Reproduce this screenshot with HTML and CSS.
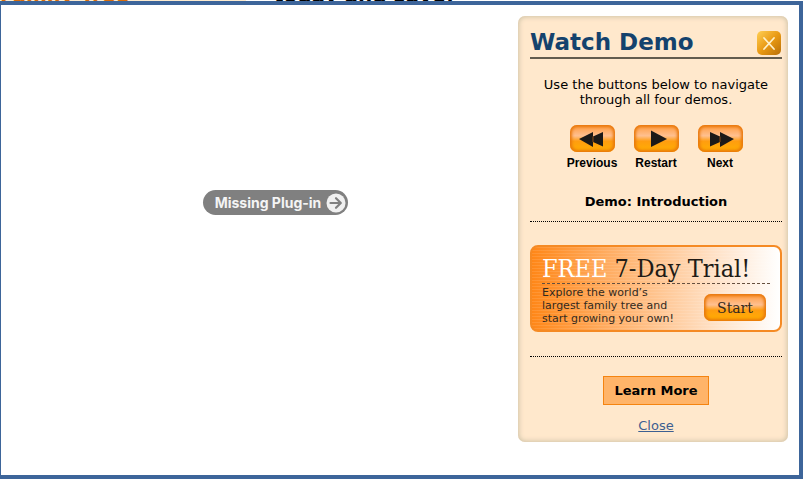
FILE: index.html
```html
<!DOCTYPE html>
<html lang="en">
<head>
	<meta charset="UTF-8">
	<title>Watch Demo</title>
	<link rel="stylesheet" href="styles.css">
</head>
<body>
	<div class="page_top">
		<div class="tree_title">Family Tree</div>
		<div class="save_title">today and save!</div>
	</div>
	<div class="demo_box">
		<div class="movie">
			<button type="button" class="plugin">Missing Plug-in
				<svg width="20" height="20" viewBox="0 0 20 20"><circle cx="10" cy="10" r="9.5" fill="#f0f0f0"/><path d="M4.5 10h10M10 5.2l4.8 4.8-4.8 4.8" fill="none" stroke="#808080" stroke-width="2.2" stroke-linecap="round" stroke-linejoin="round"/></svg>
			</button>
		</div>
		<div class="panel">
			<div class="panel_head">
				<h1>Watch Demo</h1>
				<button type="button" class="close_btn" aria-label="Close">
					<svg width="24" height="24" viewBox="0 0 24 24"><path d="M7 7l10 11M17 7L7 18" stroke="#fff0c8" stroke-width="1.8" stroke-linecap="round"/></svg>
				</button>
			</div>
			<p class="intro">Use the buttons below to navigate through all four demos.</p>
			<ul class="controls">
				<li>
					<button type="button" id="prev" aria-labelledby="prev_text"><svg width="45" height="27" viewBox="0 0 45 27"><path d="M9 14L23 7v4.500L33 7v14.500L23 17v5z" fill="#1c1a18"/><path d="M23 11.500V17" stroke="#8a4a14"/></svg></button>
					<span id="prev_text">Previous</span>
				</li>
				<li>
					<button type="button" id="restart" aria-labelledby="restart_text"><svg width="45" height="27" viewBox="0 0 45 27"><path d="M17 5.500l16 8.500-16 8z" fill="#1c1a18"/></svg></button>
					<span id="restart_text">Restart</span>
				</li>
				<li>
					<button type="button" id="next" aria-labelledby="next_text"><svg width="45" height="27" viewBox="0 0 45 27"><path d="M12 7l10 4.500V7l14 7-14 8v-5l-10 4.500z" fill="#1c1a18"/><path d="M22 11.500V17" stroke="#8a4a14"/></svg></button>
					<span id="next_text">Next</span>
				</li>
			</ul>
			<h2>Demo: Introduction</h2>
			<div class="trial">
				<div class="trial_title"><span>FREE</span> 7-Day Trial!</div>
				<div class="trial_body">
					<p>Explore the world’s<br>largest family tree and<br>start growing your own!</p>
					<button type="button" class="start">Start</button>
				</div>
			</div>
			<div class="links">
				<button type="button" class="learn">Learn More</button>
				<a href="#">Close</a>
			</div>
		</div>
	</div>
</body>
</html>
```
FILE: styles.css
```css
* {
	box-sizing: border-box;
}
body,h1,h2,p,ul {
	margin: 0;
	padding: 0;
}
body {
	min-height: 100vh;
	display: flex;
	flex-direction: column;
	font-family: Verdana, "DejaVu Sans", sans-serif;
	font-size: 13px;
	color: #000;
	background: #fff;
}
ul {
	list-style: none;
}
button {
	padding: 0;
	border: none;
	font-family: inherit;
	color: inherit;
	cursor: pointer;
}
svg {
	display: block;
}
/* page behind the demo window */
.page_top {
	height: 1px;
	overflow: hidden;
	display: flex;
	align-items: flex-end;
	font-size: 20px;
	line-height: 12px;
	font-weight: bold;
	white-space: nowrap;
}
.tree_title {
	width: 246px;
	color: #d96c0a;
	background: #fdebcf;
}
.save_title {
	padding-left: 28px;
}
.demo_box {
	flex: 1;
	display: flex;
	align-items: flex-start;
	padding: 11px 11px 33px 0;
	border: 4px solid #3d659a;
	border-left-width: 1px;
	background: #fff;
}
.movie {
	flex: 1;
	align-self: stretch;
	display: flex;
	justify-content: center;
	padding: 174px 0 0 32px;
}
.plugin {
	display: flex;
	align-items: center;
	gap: 5px;
	height: 25px;
	padding: 0 2px 0 12px;
	border-radius: 13px;
	background: #808080;
	color: #f4f4f4;
	font: bold 14px Inter, sans-serif;
}
.panel {
	width: 270px;
	padding: 12px 6px 9px 12px;
	border-radius: 7px;
	background: #ffe8cc;
	box-shadow: inset 0 0 5px 1px #cfc3a8;
	text-align: center;
}
.panel_head {
	display: flex;
	justify-content: space-between;
	align-items: center;
	height: 31px;
	border-bottom: 2px solid #635c4e;
}
.panel_head h1 {
	padding-bottom: 2px;
	font-size: 23px;
	line-height: 28px;
	color: #14426d;
}
.close_btn {
	width: 24px;
	height: 24px;
	margin-right: 1px;
	border-radius: 5px;
	background: linear-gradient(135deg, #ffcf55, #e99a14 50%, #b96f08);
}
.intro {
	padding: 18px 10px 0;
	line-height: 15px;
}
.controls {
	display: flex;
	justify-content: center;
	padding-top: 18px;
}
.controls li {
	width: 64px;
	display: flex;
	flex-direction: column;
	align-items: center;
	gap: 4px;
	font: bold 12px/14px "Liberation Sans", Arial, sans-serif;
}
.controls button,.start {
	border-radius: 7px;
	background: linear-gradient(#ff9a3c, #ffc090 40%, #ff9d10 60%, #ffb000);
	box-shadow: inset 0 0 3px 2px #e8780c;
}
.panel h2 {
	padding: 24px 0 12px;
	border-bottom: 1px dotted #000;
	font-size: 13px;
	line-height: 15px;
}
.trial {
	height: 87px;
	margin: 23px 0 24px;
	padding: 9px 10px 0;
	border: 2px solid #f58a24;
	border-radius: 8px;
	background: repeating-linear-gradient(rgba(255,255,255,.1) 0, rgba(255,255,255,.1) 1px, transparent 1px, transparent 3px), linear-gradient(90deg, #ff8718, #ffb878 40%, #ffe3ca 75%, #fff);
	text-align: left;
	color: #332a20;
}
.trial_title {
	height: 28px;
	border-bottom: 1px dashed #665040;
	font: 25px/26px "DejaVu Serif Condensed", "DejaVu Serif", serif;
	color: #211b15;
	white-space: nowrap;
}
.trial_title span {
	color: #fff;
}
.trial_body {
	display: flex;
	justify-content: space-between;
	padding-top: 2px;
}
.trial_body p {
	font-size: 11px;
	line-height: 13px;
	white-space: nowrap;
}
.start {
	width: 62px;
	height: 27px;
	margin: 8px 4px 0 0;
	font: 14px "DejaVu Serif", serif;
}
.links {
	display: flex;
	flex-direction: column;
	align-items: center;
	gap: 13px;
	padding-top: 19px;
	border-top: 1px dotted #000;
}
.learn {
	height: 29px;
	padding: 0 10px;
	border: 1px solid #f58410;
	background: #ffb469;
	font-size: 13px;
	font-weight: bold;
}
.links a {
	line-height: 15px;
	color: #3d5f91;
}
```
